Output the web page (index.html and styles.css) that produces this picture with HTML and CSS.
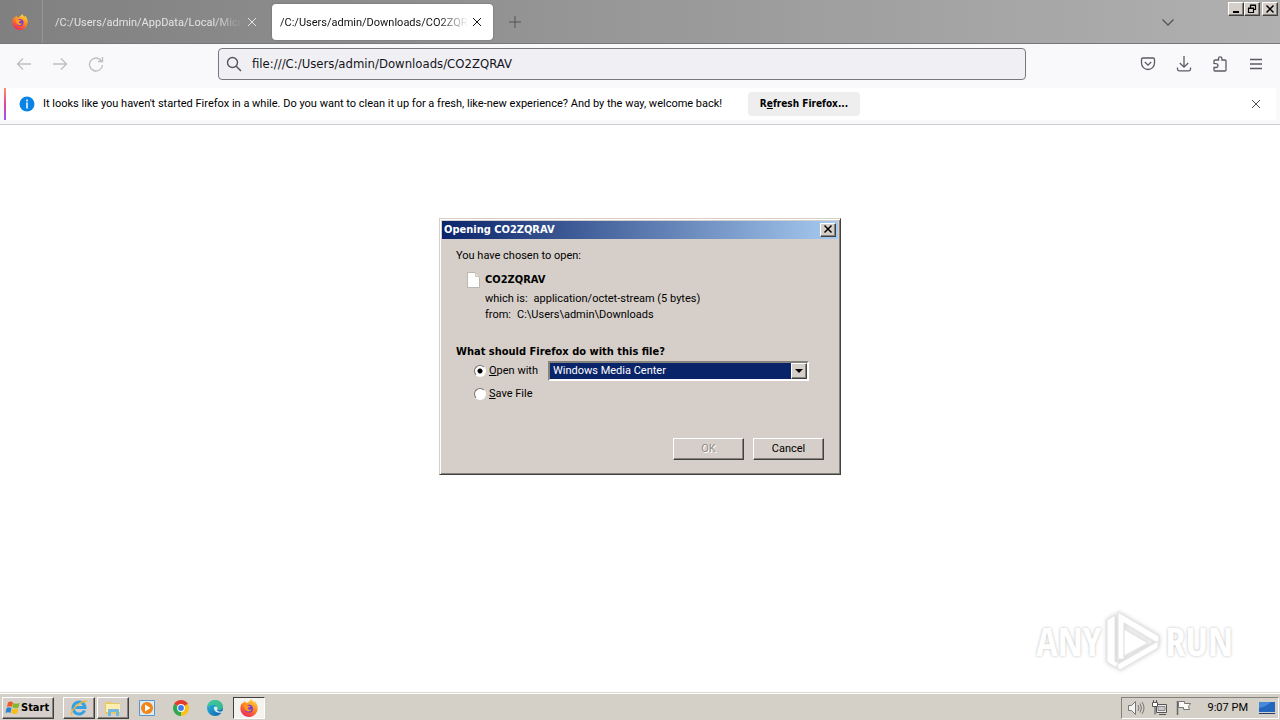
FILE: index.html
```html
<!DOCTYPE html>
<html lang="en">
<head>
<meta charset="utf-8">
<title>Opening CO2ZQRAV</title>
<link rel="stylesheet" href="styles.css">
</head>
<body>
<svg class="defs" aria-hidden="true">
  <defs>
    <linearGradient id="fox" x1="0.8" y1="0" x2="0.3" y2="1"><stop offset="0" stop-color="#ffe14a"/><stop offset="0.45" stop-color="#ff8a1e"/><stop offset="1" stop-color="#f0245c"/></linearGradient>
    <linearGradient id="edge" x1="0" y1="0" x2="1" y2="1"><stop offset="0" stop-color="#2fc3d8"/><stop offset="1" stop-color="#0b58b0"/></linearGradient>
    <symbol id="firefox" viewBox="0 0 16 16">
      <path fill="url(#fox)" d="M10.4 0c.2 1.3 1.2 2 2.3 3 .2-.5.2-1 .1-1.4 1.8 1.6 3 4 2.9 6.6C15.600 12.600 12.200 16 8 16S.3 12.600.3 8.300C.3 6 1 4.200 2.200 3c0 .6.1 1 .4 1.300.3-1 1-1.900 2-2.500 0 .8.400 1.400 1.200 1.700C7.400 3.400 8.500 1.500 10.400 0z"/>
      <circle cx="8" cy="8.600" r="3.500" fill="#7a3fd0"/>
      <path fill="#ff9a20" d="M3.500 5c1.500-.4 2.600 0 3.700.9l2 .3c-.5 1.100-1.700 1.300-2.300 1.500.2 1.700 2 2.200 3.400 1.500-.8 2.200-3.500 2.600-5 1.100C4.100 9.100 3.500 7 3.500 5z"/>
    </symbol>
    <symbol id="cross" viewBox="0 0 10 10"><path d="M1 1l8 8M9 1L1 9" fill="none" stroke="currentColor"/></symbol>
    <symbol id="boldcross" viewBox="0 0 10 10"><path d="M1.500 1.500l7 7M8.500 1.500l-7 7" fill="none" stroke="#000" stroke-width="1.500"/></symbol>
  </defs>
</svg>

<main class="window">
  <header class="tabstrip">
    <div class="pinned"><svg class="i16"><use href="#firefox"/></svg></div>
    <div class="tab"><span class="tab-label">/C:/Users/admin/AppData/Local/Micros</span><button class="plain" aria-label="Close tab"><svg class="i10"><use href="#cross"/></svg></button></div>
    <div class="tab active"><span class="tab-label">/C:/Users/admin/Downloads/CO2ZQRAV</span><button class="plain" aria-label="Close tab"><svg class="i10"><use href="#cross"/></svg></button></div>
    <button class="plain newtab" aria-label="New tab"><svg class="i12" viewBox="0 0 12 12"><path d="M6 0v12M0 6h12" stroke="currentColor"/></svg></button>
    <button class="plain alltabs" aria-label="List all tabs"><svg class="i14" viewBox="0 0 14 14"><path d="M1.500 4.500L7 10l5.500-5.500" fill="none" stroke="currentColor" stroke-width="1.300"/></svg></button>
    <div class="winbuttons">
      <button class="bevel cap" aria-label="Minimize"><svg class="i10" viewBox="0 0 10 10"><path d="M2 8h6" stroke="#000" stroke-width="2"/></svg></button>
      <button class="bevel cap" aria-label="Restore"><svg class="i10" viewBox="0 0 10 10"><path d="M3.500 3.500V1.500h5v4H7M3 1h6M1.500 4.500h5v4h-5zM1 4h6" fill="none" stroke="#000" stroke-width="1.200"/></svg></button>
      <button class="bevel cap close" aria-label="Close"><svg class="i10"><use href="#boldcross"/></svg></button>
    </div>
  </header>

  <nav class="toolbar">
    <div class="navbuttons">
      <button class="plain" aria-label="Back"><svg class="i16" viewBox="0 0 16 16"><path d="M15 8H1.500M7 2.500L1.500 8 7 13.500" fill="none" stroke="currentColor" stroke-width="1.300"/></svg></button>
      <button class="plain" aria-label="Forward"><svg class="i16" viewBox="0 0 16 16"><path d="M1 8h13.500M9 2.500L14.500 8 9 13.500" fill="none" stroke="currentColor" stroke-width="1.300"/></svg></button>
      <button class="plain" aria-label="Reload"><svg class="i16" viewBox="0 0 16 16"><path d="M13.500 5A6.500 6.500 0 1 0 14.500 9M14.500 1v4.500H10" fill="none" stroke="currentColor" stroke-width="1.400"/></svg></button>
    </div>
    <label class="urlbar">
      <svg class="i16" viewBox="0 0 16 16"><circle cx="6.500" cy="6.500" r="5" fill="none" stroke="#55545f" stroke-width="1.400"/><path d="M10.200 10.200L15 15" stroke="#55545f" stroke-width="1.500"/></svg>
      <input type="text" aria-label="Address" value="file:///C:/Users/admin/Downloads/CO2ZQRAV">
    </label>
    <div class="tools">
      <button class="plain" aria-label="Save to Pocket"><svg class="i16" viewBox="0 0 16 16"><path d="M3 2h10q1.500 0 1.500 1.500V7a6.500 6.500 0 0 1-13 0V3.500Q1.500 2 3 2zM4.800 6L8 9.200 11.200 6" fill="none" stroke="currentColor" stroke-width="1.300"/></svg></button>
      <button class="plain" aria-label="Downloads"><svg class="i16" viewBox="0 0 16 16"><path d="M8 0v11M3.800 7L8 11.200 12.200 7M1.500 11.500v1.800q0 1.500 1.500 1.500h10q1.500 0 1.500-1.500v-1.800" fill="none" stroke="currentColor" stroke-width="1.300"/></svg></button>
      <button class="plain" aria-label="Extensions"><svg class="i16" viewBox="0 0 16 16"><path d="M2 7.500V5q0-1 1-1h3.500V2.500a1.700 1.700 0 0 1 3.400 0V4H13q1 0 1 1v9q0 1-1 1H3q-1 0-1-1v-2.500h2a1.900 1.900 0 0 0 0-3.900z" fill="none" stroke="currentColor" stroke-width="1.300"/></svg></button>
      <button class="plain" aria-label="Menu"><svg class="i16" viewBox="0 0 16 16"><path d="M2 3.500h12M2 8h12M2 12.500h12" stroke="currentColor" stroke-width="1.300"/></svg></button>
    </div>
  </nav>

  <section class="notice">
    <div class="notice-body">
      <svg class="i16" viewBox="0 0 16 16"><circle cx="8" cy="8" r="7.500" fill="#0a84e4"/><path d="M8 3.500v2M8 6.500v6" stroke="#fff" stroke-width="1.500"/></svg>
      <p>It looks like you haven't started Firefox in a while. Do you want to clean it up for a fresh, like-new experience? And by the way, welcome back!</p>
      <button class="refresh">R<u>e</u>fresh Firefox...</button>
      <button class="plain dismiss" aria-label="Dismiss"><svg class="i10"><use href="#cross"/></svg></button>
    </div>
  </section>

  <div class="overlay">
    <form class="dialog" role="dialog" aria-labelledby="dialog-title">
      <div class="titlebar"><h1 id="dialog-title">Opening CO2ZQRAV</h1><button type="button" class="bevel cap" aria-label="Close"><svg class="i10"><use href="#boldcross"/></svg></button></div>
      <div class="dialog-body">
        <p>You have chosen to open:</p>
        <div class="file">
          <svg class="page" viewBox="0 0 13 16"><path d="M.5.500h8l4 4v11H.5z" fill="#fdfdfb" stroke="#b9b6b0"/><path d="M8.500.500v4h4" fill="#e4e2dc" stroke="#c9c6c0"/></svg>
          <dl>
            <div class="filename">CO2ZQRAV</div>
            <div class="row"><dt>which is:</dt><dd>application/octet-stream (5 bytes)</dd></div>
            <div class="row"><dt>from:</dt><dd>C:\Users\admin\Downloads</dd></div>
          </dl>
        </div>
        <h2>What should Firefox do with this file?</h2>
        <div class="choice">
          <input type="radio" name="action" id="open" checked><label for="open"><u>O</u>pen with</label>
          <div class="combo"><select aria-label="Application"><option>Windows Media Center</option></select><span class="bevel arrow"><svg viewBox="0 0 8 4"><path d="M0 0h8L4 4z"/></svg></span></div>
        </div>
        <div class="choice"><input type="radio" name="action" id="save"><label for="save"><u>S</u>ave File</label></div>
        <div class="actions"><button type="button" class="bevel push" disabled>OK</button><button type="button" class="bevel push">Cancel</button></div>
      </div>
    </form>
  </div>

  <div class="watermark">
    <span>ANY</span>
    <svg viewBox="0 0 56 62"><g fill="#fff" stroke="#e6e6e6" stroke-width="1.200" stroke-linejoin="round"><path d="M2 10l8-5v46l5 3-5 3-8-5z"/><path d="M13 2l41 24v8L19 13v36h-6z"/><path d="M13 54L53 31v7L15 60q-4-2-2-6z"/><path d="M19 19l24 14-24 13z"/></g></svg>
    <span>RUN</span>
  </div>
</main>

<footer class="taskbar">
  <button class="bevel start"><svg viewBox="0 0 16 16"><path d="M4 2.500q3-2 5 0L8 7Q6 5.500 3 7z" fill="#ef5a24"/><path d="M9.500 3q2 1.500 6 0l-1 4.500q-3 1.500-6 0z" fill="#7fb92c"/><path d="M2.500 8q3-1.500 5 0l-1 5q-2-1.500-5 0z" fill="#2b83d0"/><path d="M8.300 8.500q2 1.500 6 0l-1 4.500q-3 1.800-6 0z" fill="#f9bd16"/></svg>Start</button>
  <button class="bevel task" aria-label="Internet Explorer"><svg viewBox="0 0 18 18"><path d="M14.500 11.500A6 6 0 1 1 15 8.500H4" fill="none" stroke="#36a0e4" stroke-width="3"/><path d="M2 16C-1 12 12 .5 17 2.500" fill="none" stroke="#e8bc36" stroke-width="1.500"/></svg></button>
  <button class="bevel task" aria-label="Explorer"><svg viewBox="0 0 18 18"><path d="M1 3h6l1 1h8v11H1z" fill="#e8c766"/><path d="M2 5h14v8H2z" fill="#fbeeb0"/><path d="M4 17v-6q0-1 1-1h9q1 0 1 1v6h-3v-4H7v4z" fill="#73b8df"/></svg></button>
  <button class="task" aria-label="Media Player"><svg viewBox="0 0 18 18"><path d="M1.500 1.500h15v15h-15z" fill="#d9eaf8" stroke="#5d95c8"/><circle cx="9" cy="9" r="6" fill="#f28514"/><path d="M7 5.500L12.500 9 7 12.500z" fill="#fff"/></svg></button>
  <button class="task" aria-label="Chrome"><svg viewBox="0 0 18 18"><path d="M9 9L2.100 5A8 8 0 0 1 15.900 5z" fill="#e33b2e"/><path d="M9 9l6.900-4A8 8 0 0 1 9 17z" fill="#fbc116"/><path d="M9 9v8A8 8 0 0 1 2.100 5z" fill="#2da94f"/><circle cx="9" cy="9" r="3.900" fill="#fff"/><circle cx="9" cy="9" r="2.900" fill="#3f7ee8"/></svg></button>
  <button class="task" aria-label="Edge"><svg viewBox="0 0 18 18"><circle cx="9" cy="9" r="8" fill="url(#edge)"/><path d="M2 6Q5-.5 12 1.500q5 2 5 7-1 3-6 2.500 1-5-4-5-3 0-5 2z" fill="#43cf85" opacity=".75"/><path d="M8 10q-1-2 1.500-2.500 3 0 1.500 4 2 2 6 .5l-1 1.500Q9 14.500 8 10z" fill="#d7edf3"/></svg></button>
  <button class="task current" aria-label="Firefox"><svg viewBox="0 0 16 16"><use href="#firefox"/></svg></button>
  <div class="tray">
    <svg viewBox="0 0 18 16"><path d="M1.500 5.500h3l4-4v13l-4-4h-3z" fill="#f4f4f1" stroke="#777"/><path d="M11 5q2 3 0 6M13 3.500q3 4.500 0 9M15 2q4 6 0 12" fill="none" stroke="#777"/></svg>
    <svg viewBox="0 0 18 16"><path d="M5.500 4.500h10v8h-10zM8 14.500h7" fill="#eee" stroke="#555"/><path d="M7 6.500h7v4H7z" fill="#c8c8c5" stroke="#888"/><path d="M1.500 2.500h5v4h-5zM2.500 0v2M5.500 0v2M4 6.500v8" fill="#fff" stroke="#555"/></svg>
    <svg viewBox="0 0 18 16"><path d="M2.500 1v14" stroke="#666" stroke-width="1.500"/><path d="M3.500 1.500h6v2h6l-2 3 1 3H8.500v-2h-5z" fill="#fafaf7" stroke="#777"/></svg>
    <time>9:07 PM</time>
    <svg viewBox="0 0 18 16"><path d="M1 2h16v10H1z" fill="#2366bd"/><path d="M1 2h12q-5 5-12 6z" fill="#4689d8"/><path d="M1 13.500h16" stroke="#20406f"/></svg>
  </div>
</footer>
</body>
</html>
```
FILE: styles.css
```css
* { box-sizing: border-box; }
body {
  margin: 0;
  min-height: 100vh;
  display: flex;
  flex-direction: column;
  background: #fff;
  color: #000;
  font: 11px/16px Roboto, "DejaVu Sans Condensed", sans-serif;
}
h1, h2, p, dl, dd { margin: 0; font-size: inherit; }
button, input, select { font: inherit; color: inherit; }
svg { display: block; flex: none; }
.defs { position: absolute; width: 0; height: 0; }
.i10 { width: 10px; height: 10px; }
.i12 { width: 12px; height: 12px; }
.i14 { width: 14px; height: 14px; }
.i16 { width: 16px; height: 16px; }
.plain { display: flex; padding: 0; border: 0; background: none; }
.bevel {
  border: 1px solid;
  border-color: #fff #404040 #404040 #fff;
  box-shadow: inset -1px -1px #86827c;
  background: #d6cfc9;
}
.cap { display: flex; align-items: center; justify-content: center; width: 16px; height: 14px; padding: 0 1px 1px 0; }

.window { position: relative; flex: 1; display: flex; flex-direction: column; }
.tabstrip {
  display: flex;
  align-items: center;
  height: 44px;
  background: linear-gradient(to right, #808080, #b0b0b0);
  border-bottom: 1px solid #777;
  color: #e4e4e4;
}
.pinned { width: 43px; align-self: stretch; display: flex; align-items: center; padding-left: 12px; border-right: 1px solid #949494; }
.tab { display: flex; align-items: center; gap: 4px; width: 221px; height: 36px; padding: 0 11px 0 8px; margin: 0 4px; }
.tab-label {
  flex: 1;
  overflow: hidden;
  white-space: nowrap;
  padding-top: 2px;
  -webkit-mask-image: linear-gradient(to left, transparent, #000 30px);
  mask-image: linear-gradient(to left, transparent, #000 30px);
}
.tab.active { margin-left: 0; background: #fff; color: #111; border-radius: 4px; box-shadow: 0 0 2px #666; }
.newtab { margin-left: 12px; color: #555; }
.alltabs { margin-left: auto; margin-right: 53px; color: #555; }
.winbuttons { display: flex; align-self: flex-start; padding: 2px 2px 0 0; }
.close { margin-left: 2px; }

.toolbar { display: flex; align-items: center; justify-content: space-between; height: 44px; padding: 0 16px 4px; background: #f9f9fb; }
.navbuttons { display: flex; gap: 20px; width: 202px; color: #bebec3; }
.urlbar {
  flex: 1;
  max-width: 808px;
  height: 32px;
  display: flex;
  align-items: center;
  gap: 10px;
  padding: 0 7px;
  background: #f0f0f4;
  border: 1px solid #77777d;
  border-radius: 4px;
}
.urlbar input { flex: 1; min-width: 0; padding: 0; border: 0; outline: 0; background: none; color: #15141a; font-size: 13px; font-family: "DejaVu Sans Condensed", sans-serif; }
.tools { display: flex; justify-content: flex-end; gap: 20px; width: 238px; color: #5b5b66; }

.notice { background: #f9f9fb; border-bottom: 1px solid #ccc; padding: 0 4px 4px; }
.notice-body {
  display: flex;
  align-items: center;
  min-height: 32px;
  padding: 0 15px 0 13px;
  border-left: 2px solid;
  border-image: linear-gradient(#ff9664, #e0439b, #9059ff) 1;
  background: #fff;
}
.notice p { padding-left: 8px; min-width: 692px; }
.refresh { min-width: 112px; height: 24px; margin-left: 21px; border: 0; border-radius: 4px; background: #eeeeef; font-weight: bold; font-size: 10px; font-family: "DejaVu Sans Condensed", sans-serif; }
.dismiss { margin-left: auto; color: #555; }

.overlay { position: absolute; inset: 0; display: grid; place-items: center; }
.dialog {
  width: 402px;
  padding: 2px;
  background: #d6cfc9;
  border: 1px solid;
  border-color: #d6cfc9 #404040 #404040 #d6cfc9;
  box-shadow: inset 1px 1px #fff, inset -1px -1px #86827c;
}
.titlebar { display: flex; align-items: center; justify-content: space-between; height: 18px; padding: 0 2px; background: linear-gradient(to right, #0a246a, #a6caf0); color: #fff; }
.dialog-body { padding: 9px 14px 12px; }
.file { display: flex; gap: 5px; padding: 7px 0 0 11px; }
.page { width: 13px; height: 16px; margin-top: 1px; }
.filename, h2, .titlebar h1, .start { font-family: "DejaVu Sans Condensed", sans-serif; font-weight: bold; }
.filename { padding: 1px 0 3px; }
.row { display: flex; gap: 6px; }
h2 { padding-top: 21px; }
.choice { display: flex; align-items: center; min-height: 23px; padding-left: 18px; }
.choice input {
  appearance: none;
  width: 12px;
  height: 12px;
  margin: 0 3px 0 0;
  border: 1px solid;
  border-color: #77736e #fff #fff #77736e;
  border-radius: 50%;
  background: #fff;
}
.choice input:checked { background: radial-gradient(circle, #000 2px, #fff 3px); }
.combo { position: relative; display: flex; width: 261px; height: 20px; margin-left: auto; margin-right: 15px; border: 2px solid; border-color: #86827c #fff #fff #86827c; }
.combo select { flex: 1; appearance: none; border: 0; padding: 0 3px; background: #0a246a; color: #fff; }
.arrow { position: absolute; top: 0; right: 0; width: 16px; height: 16px; display: grid; place-items: center; pointer-events: none; }
.arrow svg { width: 8px; height: 4px; }
.actions { display: flex; justify-content: flex-end; gap: 9px; padding-top: 32px; }
.push { width: 71px; height: 22px; padding: 0; }
.push:disabled { color: #928d87; text-shadow: 1px 1px #fff; }

.watermark {
  position: absolute;
  right: 47px;
  bottom: 20px;
  display: flex;
  align-items: center;
  gap: 4px;
  color: #fff;
  font: 600 40px/62px "Open Sans Condensed", "Liberation Sans Narrow", "DejaVu Sans Condensed", sans-serif;
  text-shadow: 0 0 3px #bbb;
}
.watermark svg { width: 56px; height: 62px; filter: drop-shadow(0 0 2px #ccc); }

.taskbar { display: flex; align-items: center; height: 28px; padding: 2px 1px 0 2px; background: #d4d0c8; border-top: 1px solid #dcd9d3; box-shadow: inset 0 1px #fff; }
.taskbar svg { width: 18px; height: 18px; }
.start { display: flex; align-items: center; gap: 1px; width: 52px; height: 22px; margin-right: 9px; padding: 0 1px; }
.start svg { width: 16px; height: 16px; }
.task { display: grid; place-items: center; width: 32px; height: 22px; margin-right: 2px; padding: 0; }
.task:not(.bevel) { border: 0; background: none; }
.task.current { border: 1px solid; border-color: #404040 #fff #fff #404040; background: #f5f3f0; }
.tray { display: flex; align-items: center; gap: 6px; height: 22px; margin-left: auto; padding: 0 2px 0 5px; border: 1px solid; border-color: #86827c #fff #fff #86827c; }
.tray svg { width: 18px; height: 16px; }
.tray time { padding: 0 4px 0 9px; }
```
